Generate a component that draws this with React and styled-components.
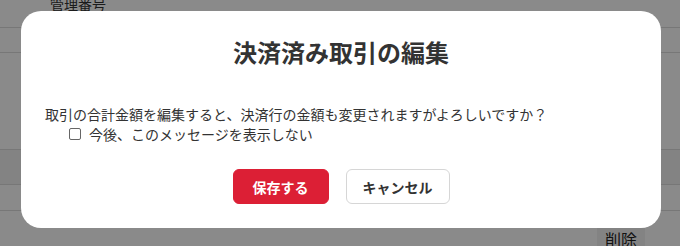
import React from 'react'
import styled, { createGlobalStyle } from 'styled-components'

const GlobalStyle = createGlobalStyle`
  body {
    margin: 0;
    font-family: "Noto Sans CJK JP", "Noto Sans", sans-serif;
    color: #333;
  }
`;

export default function App() {
  return (
    <Page>
      <GlobalStyle />
      <Behind>
        <HeadCell>管理番号</HeadCell>
        <Row h={24} />
        <Row h={96} />
        <Row h={34} shaded />
        <Row h={25} />
        <Footer>
          <GrayButton>削除</GrayButton>
        </Footer>
      </Behind>
      <Overlay>
        <Modal>
          <Title>決済済み取引の編集</Title>
          <Message>取引の合計金額を編集すると、決済行の金額も変更されますがよろしいですか？</Message>
          <CheckLine>
            <Box type="checkbox" />
            今後、このメッセージを表示しない
          </CheckLine>
          <Actions>
            <Button primary>保存する</Button>
            <Button>キャンセル</Button>
          </Actions>
        </Modal>
      </Overlay>
    </Page>
  )
}

const Page = styled.div`
  position: relative;
  width: 680px;
  height: 246px;
  overflow: hidden;
  background: #fff;
`;

const Behind = styled.div`
  display: flex;
  flex-direction: column;
`;

const HeadCell = styled.div`
  box-sizing: border-box;
  height: 34px;
  margin-top: -6px;
  padding-left: 50px;
  font-size: 14px;
  line-height: 20px;
  border-bottom: 1px solid #ddd;
`;

const Row = styled.div`
  height: ${p => p.h}px;
  background: ${p => (p.shaded ? '#f2f2f2' : '#fff')};
  border-bottom: 1px solid #ddd;
`;

const Footer = styled.div`
  display: flex;
  justify-content: flex-end;
  padding: 15px 35px 0 0;
`;

const GrayButton = styled.div`
  width: 48px;
  height: 30px;
  display: flex;
  justify-content: center;
  font-size: 16px;
  line-height: 26px;
  background: #f2f2f2;
  color: #222;
`;

const Overlay = styled.div`
  position: absolute;
  inset: 0;
  background: rgba(0, 0, 0, 0.46);
`;

const Modal = styled.div`
  position: absolute;
  left: 21px;
  top: 11px;
  width: 640px;
  height: 217px;
  box-sizing: border-box;
  padding: 23px 24px 24px;
  background: #fff;
  border-radius: 20px;
  display: flex;
  flex-direction: column;
`;

const Title = styled.h2`
  margin: 0 0 34px;
  font-size: 24px;
  line-height: 36px;
  font-weight: 700;
  text-align: center;
  color: #333;
`;

const Message = styled.p`
  margin: 0;
  font-size: 14px;
  line-height: 20px;
  color: #333;
`;

const CheckLine = styled.label`
  display: flex;
  align-items: center;
  gap: 8px;
  padding-left: 24px;
  font-size: 14px;
  line-height: 20px;
  color: #333;
`;

const Box = styled.input`
  appearance: none;
  margin: 0;
  width: 12px;
  height: 12px;
  border: 1px solid #666;
  border-radius: 2px;
  background: #fff;
`;

const Actions = styled.div`
  display: flex;
  justify-content: center;
  gap: 17px;
  margin-top: 25px;
`;

const Button = styled.button`
  height: 35px;
  padding: ${p => (p.primary ? '0 19px' : '0 16px')};
  border-radius: 6px;
  font-family: inherit;
  font-size: 14px;
  font-weight: 700;
  border: 1px solid ${p => (p.primary ? '#dc1f35' : '#d6d6d6')};
  background: ${p => (p.primary ? '#dc1f35' : '#fff')};
  color: ${p => (p.primary ? '#fff' : '#333')};
`;
